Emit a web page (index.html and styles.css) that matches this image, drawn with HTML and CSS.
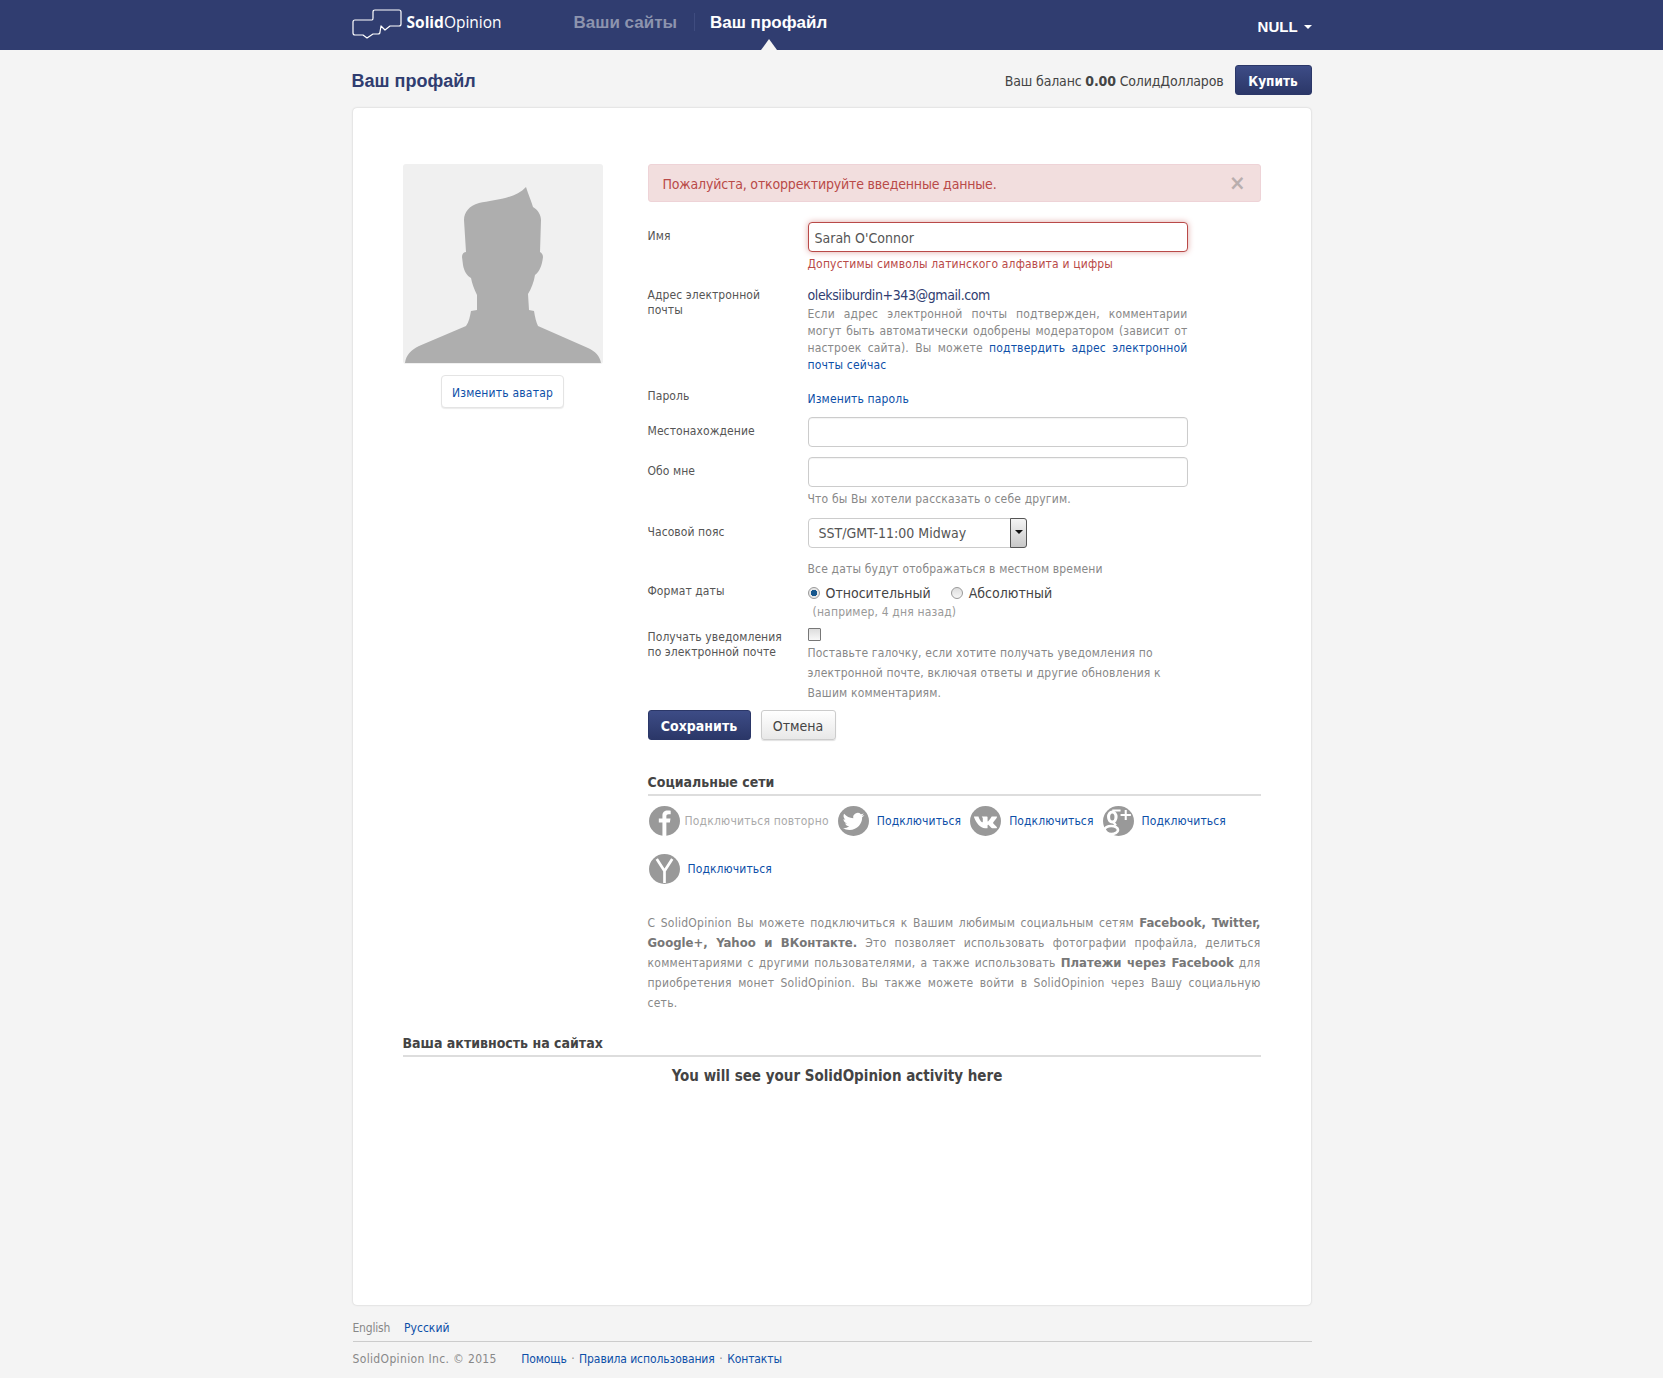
FILE: index.html
```html
<!DOCTYPE html>
<html lang="ru">
<head>
  <meta charset="UTF-8" />
  <title>Ваш профайл</title>
  <link rel="stylesheet" href="styles.css">
</head>
<body>

<header class="topbar">
  <div class="wrap topbar-in">
    <a class="logo" href="#">
      <svg class="logo-mark" viewBox="0 0 52 32" width="52" height="32">
        <path d="M3 11 H20 Q21 11 21 9 V3 Q21 1 23 1 H47 Q49 1 49 3 V15 Q49 17 47 17 H38 L33 21 L29 17 L28 23 Q28 25 26 25 H21 L15 29 L11 26 H3 Q1 26 1 24 V13 Q1 11 3 11 Z" fill="none" stroke="#fff" stroke-width="1.2" stroke-linejoin="round"/>
      </svg>
      <span class="logo-text"><b>Solid</b>Opinion</span>
    </a>
    <nav class="mainnav">
      <a class="nav-off" href="#">Ваши сайты</a>
      <a class="nav-on" href="#">Ваш профайл</a>
    </nav>
    <a class="usermenu" href="#">NULL <i class="usercaret"></i></a>
  </div>
</header>

<main class="wrap">
  <div class="pagehead">
    <h1>Ваш профайл</h1>
    <div class="balance">
      <span class="bal-text">Ваш баланс <b>0.00</b> СолидДолларов</span>
      <a class="btn btn-blue btn-buy" href="#">Купить</a>
    </div>
  </div>

  <section class="card">
    <div class="profile">
      <aside class="side">
        <div class="avatar">
          <svg viewBox="0 0 200 200" width="200" height="200">
            <path fill="#aeaeae" d="M2 199 C3 191 8 186 16 182 L63 162 C66 158 67 152 68 147 L74 146 L74 131 C71 125 69 119 68 114 C64 112 61 107 60 101 L59 93 C59 90 61 88 63 88 L61 56 C61 48 66 42 76 39 C90 36 112 35 123 23 C125 30 128 36 130 43 C135 46 138 51 138 56 L137 88 C139 89 140 91 140 93 C139 101 137 107 132 111 C131 118 128 125 125 130 L126 146 L131 147 C132 153 133 158 135 162 L185 184 C192 187 197 192 198 199 Z"/>
          </svg>
        </div>
        <a class="avatar-btn" href="#">Изменить аватар</a>
      </aside>

      <div class="main-col">
        <div class="alert">Пожалуйста, откорректируйте введенные данные.<span class="alert-x">×</span></div>

        <form class="form">
          <div class="row row-name">
            <label class="lbl">Имя</label>
            <div class="field">
              <input class="inp inp-err" type="text" value="Sarah O'Connor">
              <div class="err">Допустимы символы латинского алфавита и цифры</div>
            </div>
          </div>

          <div class="row row-email">
            <label class="lbl lbl-top">Адрес электронной почты</label>
            <div class="field">
              <div class="email">oleksiiburdin+343@gmail.com</div>
              <p class="help help-just">Если адрес электронной почты подтвержден, комментарии могут быть автоматически одобрены модератором (зависит от настроек сайта). Вы можете <a href="#">подтвердить адрес электронной почты сейчас</a></p>
            </div>
          </div>

          <div class="row row-pass">
            <label class="lbl lbl-flat">Пароль</label>
            <div class="field"><a class="passlink" href="#">Изменить пароль</a></div>
          </div>

          <div class="row row-loc">
            <label class="lbl">Местонахождение</label>
            <div class="field"><input class="inp" type="text"></div>
          </div>

          <div class="row row-about">
            <label class="lbl">Обо мне</label>
            <div class="field">
              <input class="inp" type="text">
              <p class="help help-about">Что бы Вы хотели рассказать о себе другим.</p>
            </div>
          </div>

          <div class="row row-tz">
            <label class="lbl">Часовой пояс</label>
            <div class="field">
              <div class="selectbox">
                <select class="sel"><option>SST/GMT-11:00 Midway</option></select>
                <span class="sel-btn"></span>
              </div>
              <p class="help help-tz">Все даты будут отображаться в местном времени</p>
            </div>
          </div>

          <div class="row row-date">
            <label class="lbl lbl-flat">Формат даты</label>
            <div class="field">
              <div class="radios">
                <span class="radio radio-on"></span><span class="radio-text">Относительный</span>
                <span class="radio"></span><span class="radio-text">Абсолютный</span>
              </div>
              <p class="help help-eg">(например, 4 дня назад)</p>
            </div>
          </div>

          <div class="row row-notify">
            <label class="lbl lbl-notify">Получать уведомления по электронной почте</label>
            <div class="field">
              <span class="check"></span>
              <p class="help help-notify">Поставьте галочку, если хотите получать уведомления по электронной почте, включая ответы и другие обновления к Вашим комментариям.</p>
            </div>
          </div>

          <div class="actions">
            <a class="btn btn-blue btn-save" href="#">Сохранить</a>
            <a class="btn btn-grey" href="#">Отмена</a>
          </div>
        </form>

        <h3 class="sect sect-social">Социальные сети</h3>
        <div class="socials">
          <span class="soc soc-fb">
            <svg class="soc-ico" viewBox="0 0 30 30" preserveAspectRatio="none"><circle cx="15" cy="15" r="15" fill="#999"/><path fill="#fff" d="M13 30 V16.5 H9.5 V12.5 H13 V9.5 C13 6 15 4.5 18 4.5 C19.3 4.5 20.3 4.6 21 4.7 V8.2 H19 C17.4 8.2 16.8 9 16.8 10.2 V12.5 H20.8 L20.2 16.5 H16.8 V30 Z"/></svg>
            <span class="soc-done">Подключиться повторно</span>
          </span>
          <span class="soc soc-tw">
            <svg class="soc-ico" viewBox="0 0 30 30" preserveAspectRatio="none"><circle cx="15" cy="15" r="15" fill="#999"/><g transform="translate(4.5 5) scale(.875)"><path fill="#fff" d="M23.953 4.57a10 10 0 01-2.825.775 4.958 4.958 0 002.163-2.723c-.951.555-2.005.959-3.127 1.184a4.92 4.92 0 00-8.384 4.482C7.69 8.095 4.067 6.13 1.64 3.162a4.822 4.822 0 00-.666 2.475c0 1.71.87 3.213 2.188 4.096a4.904 4.904 0 01-2.228-.616v.06a4.923 4.923 0 003.946 4.827 4.996 4.996 0 01-2.212.085 4.936 4.936 0 004.604 3.417 9.867 9.867 0 01-6.102 2.105c-.39 0-.779-.023-1.17-.067a13.995 13.995 0 007.557 2.209c9.053 0 13.998-7.496 13.998-13.985 0-.21 0-.42-.015-.63A9.935 9.935 0 0024 4.59z"/></g></svg>
            <a href="#">Подключиться</a>
          </span>
          <span class="soc soc-vk">
            <svg class="soc-ico" viewBox="0 0 30 30" preserveAspectRatio="none"><circle cx="15" cy="15" r="15" fill="#999"/><path fill="#fff" d="M4 10.5 H8.2 C8.9 13 10 15 11.6 16.2 C12.1 16.5 12.4 16.2 12.4 15.5 V12.5 C12.3 11.5 11.7 11.2 11.4 10.8 C11.4 10.5 11.6 10.4 12 10.4 H16.2 C16.8 10.4 17 10.7 17 11.3 V15 C17 15.5 17.3 15.6 17.6 15.3 C19 14 20 12.4 20.8 10.8 C21 10.5 21.2 10.4 21.6 10.4 H25.4 C26.2 10.4 26.3 10.8 26.1 11.3 C25.4 12.8 23.6 15 22.6 16.2 C22.2 16.7 22.3 17 22.6 17.4 C23.8 18.6 25.2 20 26 21.2 C26.3 21.8 26 22.2 25.4 22.2 H21.6 C21 22.2 20.7 22 20.3 21.5 C19.6 20.7 18.8 19.6 18 19 C17.5 18.6 17 18.8 17 19.4 V21.4 C17 22 16.8 22.2 16.2 22.2 H14.6 C10 22.2 6 17 4 11.5 C3.8 10.9 3.8 10.5 4 10.5 Z"/></svg>
            <a href="#">Подключиться</a>
          </span>
          <span class="soc soc-gp">
            <svg class="soc-ico" viewBox="0 0 30 30" preserveAspectRatio="none"><circle cx="15" cy="15" r="15" fill="#999"/><g fill="none" stroke="#fff"><ellipse cx="9" cy="11" rx="3.6" ry="5" stroke-width="3"/><path d="M9 4.5 H17 M10 16 L12.5 19.5" stroke-width="2.2"/><ellipse cx="8" cy="24" rx="6.5" ry="4" stroke-width="2.6"/><path d="M22 4 V14 M17 9 H27" stroke-width="2"/></g></svg>
            <a href="#">Подключиться</a>
          </span>
          <span class="soc soc-ya">
            <svg class="soc-ico" viewBox="0 0 30 30" preserveAspectRatio="none"><circle cx="15" cy="15" r="15" fill="#999"/><path d="M7.5 5 L15 17 L22.5 5 M15 17 V29" stroke="#fff" stroke-width="2.6" fill="none"/></svg>
            <a href="#">Подключиться</a>
          </span>
        </div>

        <p class="about">С SolidOpinion Вы можете подключиться к Вашим любимым социальным сетям <b>Facebook, Twitter, Google+, Yahoo и ВКонтакте.</b> Это позволяет использовать фотографии профайла, делиться комментариями с другими пользователями, а также использовать <b>Платежи через Facebook</b> для приобретения монет SolidOpinion. Вы также можете войти в SolidOpinion через Вашу социальную сеть.</p>
      </div>
    </div>

    <h3 class="sect sect-activity">Ваша активность на сайтах</h3>
    <p class="empty">You will see your SolidOpinion activity here</p>
  </section>

  <footer class="foot">
    <div class="langs"><span class="lang-off">English</span><a href="#">Русский</a></div>
    <div class="legal">
      <span class="copy">SolidOpinion Inc. © 2015</span>
      <a href="#">Помощь</a><span class="dot">·</span><a href="#">Правила использования</a><span class="dot">·</span><a href="#">Контакты</a>
    </div>
  </footer>
</main>

</body>
</html>
```

FILE: styles.css
```css
* {
  box-sizing: border-box;
}
body {
  margin: 0;
  background: #f4f4f4;
  color: #555;
  font-family: "DejaVu Sans Condensed", "DejaVu Sans", sans-serif;
  font-stretch: condensed;
  font-size: 12px;
}
a {
  color: #0d4fa8;
  text-decoration: none;
}
.wrap {
  width: 960px;
  margin: 0 auto;
}

/* header */
.topbar {
  height: 50px;
  background: #303d70;
}
.topbar-in {
  display: flex;
  position: relative;
  height: 50px;
}
.logo {
  display: flex;
  width: 222px;
  padding-top: 9px;
  color: #fff;
}
.logo-mark {
  flex: none;
}
.logo-text {
  margin: 3px 0 0 3px;
  font-family: "Open Sans", sans-serif;
  font-stretch: normal;
  font-size: 15.5px;
  line-height: 20px;
}
.mainnav {
  display: flex;
  flex: 1;
  padding-top: 13px;
  font-family: "Liberation Sans", sans-serif;
  font-stretch: normal;
  font-size: 17px;
  font-weight: 700;
  line-height: 20px;
}
.nav-off {
  padding-right: 17px;
  border-right: 1px solid #3f4c7f;
  height: 18px;
  color: #8d94ae;
}
.nav-on {
  position: relative;
  margin-left: 15px;
  color: #fff;
}
.nav-on::after {
  content: "";
  position: absolute;
  left: 50%;
  top: 26px;
  margin-left: -8px;
  border: 8px solid transparent;
  border-top: 0;
  border-bottom: 11px solid #f4f4f4;
}
.usermenu {
  padding-top: 18px;
  color: #fff;
  font-family: "Liberation Sans", sans-serif;
  font-stretch: normal;
  font-size: 15px;
  font-weight: 700;
  line-height: 18px;
}
.usercaret {
  display: inline-block;
  margin-left: 2px;
  vertical-align: 3px;
  border: 4px solid transparent;
  border-top-color: #fff;
  border-bottom: 0;
}

/* title line */
.pagehead {
  display: flex;
  justify-content: space-between;
  align-items: center;
  height: 58px;
  padding-top: 1px;
}
.pagehead h1 {
  margin: 2px 0 0;
  color: #303d70;
  font-family: "Liberation Sans", sans-serif;
  font-stretch: normal;
  font-size: 18px;
  line-height: 22px;
}
.balance {
  display: flex;
  align-items: center;
}
.bal-text {
  margin-top: 3px;
  color: #444;
  font-size: 14px;
  letter-spacing: -.16px;
}
.btn {
  display: inline-block;
  height: 30px;
  border-radius: 3px;
  font-size: 14px;
  line-height: 30px;
  text-align: center;
}
.btn-blue {
  background: linear-gradient(#3d4c86, #2b3768);
  border: 1px solid #2b3768;
  color: #fff;
  font-weight: 700;
}
.btn-buy {
  width: 77px;
  margin-left: 11px;
  font-size: 13.5px;
}
.btn-grey {
  width: 75px;
  background: linear-gradient(#fff, #e8e8e8);
  border: 1px solid #ccc;
  box-shadow: 0 1px 1px rgba(0,0,0,.12);
  color: #444;
}

/* card */
.card {
  height: 1197px;
  margin: 0 1px;
  padding: 56px 50px 0;
  background: #fff;
  border-radius: 4px;
  box-shadow: 0 0 2px rgba(0,0,0,.22);
}
.profile {
  display: flex;
  gap: 45px;
}
.side {
  flex: none;
  width: 200px;
  text-align: center;
}
.avatar {
  width: 200px;
  height: 200px;
  background: #f0f0f0;
  border-radius: 3px;
}
.avatar svg {
  display: block;
}
.avatar-btn {
  display: inline-block;
  width: 123px;
  height: 33px;
  margin-top: 11px;
  background: #fff;
  border: 1px solid #e4e4e4;
  border-radius: 4px;
  box-shadow: 0 1px 1px rgba(0,0,0,.08);
  letter-spacing: .2px;
  line-height: 34px;
}
.main-col {
  flex: 1;
}
.alert {
  position: relative;
  height: 38px;
  padding: 0 14px;
  background: #f2dede;
  border: 1px solid #eed3d7;
  border-radius: 3px;
  color: #b94a48;
  font-size: 14px;
  letter-spacing: -.17px;
  line-height: 38px;
}
.alert-x {
  position: absolute;
  right: 14px;
  top: -1px;
  color: #b9aeae;
  font-size: 22px;
  font-weight: 700;
}

/* form rows */
.row {
  display: flex;
}
.lbl {
  flex: none;
  width: 160px;
  padding-top: 7px;
  padding-right: 20px;
  color: #555;
  letter-spacing: .08px;
  line-height: 15px;
}
.lbl-top {
  padding-top: 3px;
}
.lbl-flat {
  padding-top: 0;
}
.lbl-notify {
  padding-top: 2px;
}
.field {
  width: 380px;
}
.inp {
  display: block;
  width: 380px;
  height: 30px;
  padding: 2px 6px 0;
  border: 1px solid #ccc;
  border-radius: 4px;
  box-shadow: inset 0 1px 1px rgba(0,0,0,.05);
  font: inherit;
  font-size: 14px;
  color: #555;
}
.inp-err {
  border-color: #b94a48;
  box-shadow: 0 0 6px #e0a8a7;
}
.row-name {
  margin-top: 20px;
}
.err {
  margin-top: 4px;
  color: #b94a48;
  letter-spacing: .17px;
  line-height: 17px;
}
.row-email {
  margin-top: 12px;
}
.email {
  color: #303d70;
  font-size: 14px;
  letter-spacing: -.4px;
  line-height: 20px;
}
.help {
  margin: 0;
  color: #888;
  letter-spacing: .17px;
  line-height: 17px;
}
.help a {
  color: #0d4fa8;
}
.help-just {
  margin-top: 1px;
  text-align: justify;
}
.row-pass {
  margin-top: 15px;
  line-height: 20px;
}
.passlink {
  display: block;
  padding-top: 2px;
  letter-spacing: .15px;
  line-height: 17px;
}
.row-loc {
  margin-top: 9px;
}
.row-about {
  margin-top: 10px;
}
.help-about {
  margin-top: 4px;
}
.row-tz {
  margin-top: 10px;
}
.selectbox {
  position: relative;
  width: 219px;
  height: 30px;
}
.sel {
  display: block;
  width: 219px;
  height: 30px;
  padding: 0 20px 0 10px;
  appearance: none;
  background: #fff;
  border: 1px solid #ccc;
  border-radius: 4px;
  font: inherit;
  font-size: 14px;
  color: #555;
}
.sel-btn {
  position: absolute;
  right: 0;
  top: 0;
  width: 17px;
  height: 30px;
  background: linear-gradient(#f4f4f4, #c8c8c8);
  border: 1px solid #555;
  border-radius: 0 3px 3px 0;
}
.sel-btn::after {
  content: "";
  position: absolute;
  left: 4px;
  top: 11px;
  border: 4px solid transparent;
  border-top-color: #111;
  border-bottom: 0;
}
.help-tz {
  margin-top: 13px;
}
.row-date {
  margin-top: 6px;
}
.radios {
  display: flex;
  align-items: center;
  height: 19px;
  font-size: 14px;
  color: #444;
}
.radio {
  width: 12px;
  height: 12px;
  margin-top: -1px;
  background: linear-gradient(#ddd, #f6f6f6);
  border: 1px solid #999;
  border-radius: 50%;
}
.radio-on {
  background: radial-gradient(circle, #17578d 0 3px, #e8e8e8 3.5px);
}
.radio-text {
  margin: -2px 20px 0 6px;
}
.help-eg {
  margin-top: 1px;
  padding-left: 5px;
  color: #999;
}
.row-notify {
  margin-top: 7px;
}
.check {
  display: block;
  width: 13px;
  height: 13px;
  background: linear-gradient(#ddd, #f8f8f8);
  border: 1px solid #777;
  border-radius: 1px;
}
.help-notify {
  margin-top: 2px;
  line-height: 20px;
}
.actions {
  display: flex;
  gap: 10px;
  margin-top: 7px;
}
.btn-save {
  width: 103px;
}

/* social */
.sect {
  margin: 0;
  padding-bottom: 3px;
  border-bottom: 2px solid #ddd;
  color: #444;
  font-size: 14px;
  font-weight: 700;
  line-height: 17px;
}
.sect-social {
  margin-top: 34px;
}
.socials {
  display: flex;
  flex-wrap: wrap;
  row-gap: 18px;
  margin-top: 10px;
  padding-left: 1px;
}
.soc {
  display: flex;
  align-items: center;
  height: 30px;
  margin-right: 9px;
  letter-spacing: .1px;
}
.soc-ico {
  flex: none;
  width: 31px;
  height: 30px;
  margin-right: 8px;
}
.soc-fb .soc-ico {
  margin-right: 5px;
}
.soc-done {
  color: #aaa;
  letter-spacing: .2px;
}
.about {
  margin: 29px 0 0;
  color: #888;
  letter-spacing: .26px;
  line-height: 20px;
  text-align: justify;
}
.about b {
  color: #777;
  font-size: 13px;
  letter-spacing: 0;
}

/* activity */
.sect-activity {
  margin-top: 22px;
}
.empty {
  margin: 9px 0 0 11px;
  color: #444;
  font-family: "DejaVu Sans", sans-serif;
  font-size: 15px;
  font-weight: 700;
  line-height: 20px;
  text-align: center;
}

/* footer */
.foot {
  padding-left: 1px;
  color: #888;
}
.langs {
  display: flex;
  gap: 14px;
  height: 37px;
  padding-top: 15px;
  border-bottom: 1px solid #ccc;
  line-height: 16px;
}
.lang-off {
  letter-spacing: -.2px;
}
.legal {
  padding-top: 9px;
  line-height: 16px;
}
.legal a {
  letter-spacing: -.1px;
}
.copy {
  margin-right: 21px;
  color: #888;
  letter-spacing: .35px;
}
.dot {
  margin: 0 4.5px;
}
```
